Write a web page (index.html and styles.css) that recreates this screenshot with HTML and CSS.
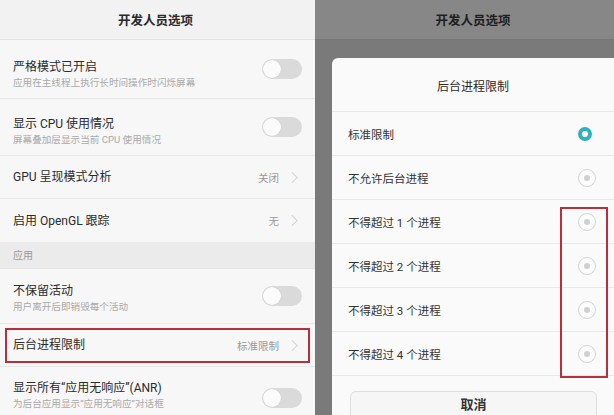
FILE: index.html
```html
<!DOCTYPE html>
<html lang="zh-CN">
<head>
<meta charset="utf-8">
<title>开发人员选项</title>
<link rel="stylesheet" href="styles.css">
</head>
<body>
<div class="screens">
  <section class="screen left">
    <header class="topbar">开发人员选项</header>
    <div class="row two r1">
      <div class="texts"><div class="title">严格模式已开启</div><div class="sub">应用在主线程上执行长时间操作时闪烁屏幕</div></div>
      <span class="toggle"><span class="knob"></span></span>
    </div>
    <div class="row two r2">
      <div class="texts"><div class="title">显示 CPU 使用情况</div><div class="sub">屏幕叠加层显示当前 CPU 使用情况</div></div>
      <span class="toggle"><span class="knob"></span></span>
    </div>
    <div class="row one r3">
      <div class="title">GPU 呈现模式分析</div>
      <div class="value">关闭<svg class="chev" viewBox="0 0 8 14"><polyline points="1,1 7,7 1,13"/></svg></div>
    </div>
    <div class="row one r4">
      <div class="title">启用 OpenGL 跟踪</div>
      <div class="value">无<svg class="chev" viewBox="0 0 8 14"><polyline points="1,1 7,7 1,13"/></svg></div>
    </div>
    <div class="section">应用</div>
    <div class="row two r5">
      <div class="texts"><div class="title">不保留活动</div><div class="sub">用户离开后即销毁每个活动</div></div>
      <span class="toggle"><span class="knob"></span></span>
    </div>
    <div class="row one r6 marked">
      <div class="title">后台进程限制</div>
      <div class="value">标准限制<svg class="chev" viewBox="0 0 8 14"><polyline points="1,1 7,7 1,13"/></svg></div>
    </div>
    <div class="row two r7">
      <div class="texts"><div class="title">显示所有“应用无响应”(ANR)</div><div class="sub">为后台应用显示“应用无响应”对话框</div></div>
      <span class="toggle"><span class="knob"></span></span>
    </div>
  </section>
  <section class="screen right">
    <header class="topbar dim">开发人员选项</header>
    <div class="dialog">
      <div class="dtitle">后台进程限制</div>
      <div class="opt"><span>标准限制</span><span class="radio on"></span></div>
      <div class="opt"><span>不允许后台进程</span><span class="radio"></span></div>
      <div class="opt"><span>不得超过 1 个进程</span><span class="radio"></span></div>
      <div class="opt"><span>不得超过 2 个进程</span><span class="radio"></span></div>
      <div class="opt"><span>不得超过 3 个进程</span><span class="radio"></span></div>
      <div class="opt"><span>不得超过 4 个进程</span><span class="radio"></span></div>
      <div class="cancel">取消</div>
      <div class="redbox"></div>
    </div>
  </section>
</div>
</body>
</html>
```
FILE: styles.css
```css
html, body {
  margin: 0;
  padding: 0;
  background: #7b7b7b;
}
body {
  width: 614px;
  height: 415px;
  overflow: hidden;
  font-family: "Roboto", "Noto Sans CJK SC", sans-serif;
}
.screens {
  display: flex;
  width: 614px;
  height: 415px;
  overflow: hidden;
}
.screen {
  height: 415px;
  overflow: hidden;
  flex: none;
}
.left {
  width: 315px;
  background: #f7f7f7;
}
.right {
  width: 316px;
  background: #7a7a7a;
}
.topbar {
  height: 40px;
  box-sizing: border-box;
  display: flex;
  align-items: center;
  justify-content: center;
  font-size: 12.5px;
  font-weight: 700;
  color: #2a2a2a;
  background: #f2f2f2;
  border-bottom: 1px solid #e2e2e2;
  padding-right: 4px;
}
.topbar.dim {
  background: #878787;
  color: #1e1e1e;
  border-bottom: 1px solid #767676;
  padding-right: 0;
}
.row {
  display: flex;
  align-items: center;
  justify-content: space-between;
  box-sizing: border-box;
  padding: 0 13px 0 13px;
  border-bottom: 1px solid #e8e8e8;
  position: relative;
}
.row.two .texts {
  align-self: flex-start;
}
.r1 { height: 59px; }
.r1 .texts { margin-top: 19px; }
.r2 { height: 57px; }
.r2 .texts { margin-top: 17px; }
.row.one { height: 43px; }
.r4 { height: 41px; border-bottom: none; }
.r5 { height: 55px; }
.r5 .texts { margin-top: 14px; }
.r6 { height: 44px; }
.r7 { height: 56px; border-bottom: none; }
.r7 .texts { margin-top: 13px; }
.r7 .toggle { margin-top: 6px; }
.title {
  font-size: 12px;
  color: #2b2b2b;
  line-height: 16px;
}
.sub {
  font-size: 9.6px;
  color: #a9a9a9;
  line-height: 13px;
  margin-top: 1px;
}
.value {
  display: flex;
  align-items: center;
  font-size: 10.5px;
  color: #9a9a9a;
}
.chev {
  width: 7px;
  height: 13px;
  margin-left: 12px;
  margin-right: 4px;
  fill: none;
  stroke: #cfcfcf;
  stroke-width: 1.2;
}
.toggle {
  width: 40px;
  height: 20px;
  border-radius: 10px;
  background: #dadada;
  display: flex;
  align-items: center;
  padding-left: 1px;
  box-sizing: border-box;
}
.knob {
  width: 18px;
  height: 18px;
  border-radius: 50%;
  background: #fbfbfb;
  box-shadow: 0 0 1px rgba(0,0,0,0.15);
}
.section {
  height: 27px;
  background: #ebebeb;
  display: flex;
  align-items: center;
  padding-left: 13px;
  padding-bottom: 2px;
  font-size: 10px;
  color: #9a9a9a;
  border-bottom: 1px solid #e2e2e2;
  box-sizing: border-box;
}
.marked::after {
  content: "";
  position: absolute;
  left: 5px;
  right: 5px;
  top: 4px;
  bottom: 3px;
  border: 2px solid #b3303c;
}
.dialog {
  position: relative;
  margin: 18px 0 0 17px;
  width: 282px;
  height: 400px;
  background: #fafafa;
  border-radius: 6px 0 0 0;
}
.dtitle {
  height: 51px;
  display: flex;
  align-items: center;
  justify-content: center;
  font-size: 12px;
  color: #2b2b2b;
  border-bottom: 1px solid #e8e8e8;
  padding-top: 2px;
}
.opt {
  height: 44px;
  box-sizing: border-box;
  display: flex;
  align-items: center;
  justify-content: space-between;
  padding: 0 18px 0 16px;
  font-size: 11.5px;
  color: #333;
  border-bottom: 1px solid #e8e8e8;
}
.radio {
  width: 18px;
  height: 18px;
  box-sizing: border-box;
  border-radius: 50%;
  border: 1px solid #d4d4d4;
  display: flex;
  align-items: center;
  justify-content: center;
  background: #fcfcfc;
}
.radio::before {
  content: "";
  width: 6px;
  height: 6px;
  border-radius: 50%;
  background: #d0d0d0;
}
.radio.on {
  width: 14px;
  height: 14px;
  margin-right: 4px;
  border: 4px solid #34b0ba;
  background: #ffffff;
}
.radio.on::before {
  display: none;
}
.cancel {
  margin: 15px 17px 0 18px;
  height: 40px;
  box-sizing: border-box;
  border: 1px solid #dedede;
  border-radius: 6px;
  background: #f6f6f6;
  display: flex;
  justify-content: center;
  padding-top: 5px;
  font-size: 13px;
  line-height: 16px;
  font-weight: 700;
  color: #333;
}
.redbox {
  position: absolute;
  left: 228px;
  top: 149px;
  width: 48px;
  height: 171px;
  box-sizing: border-box;
  border: 2px solid #b3303c;
}
```
